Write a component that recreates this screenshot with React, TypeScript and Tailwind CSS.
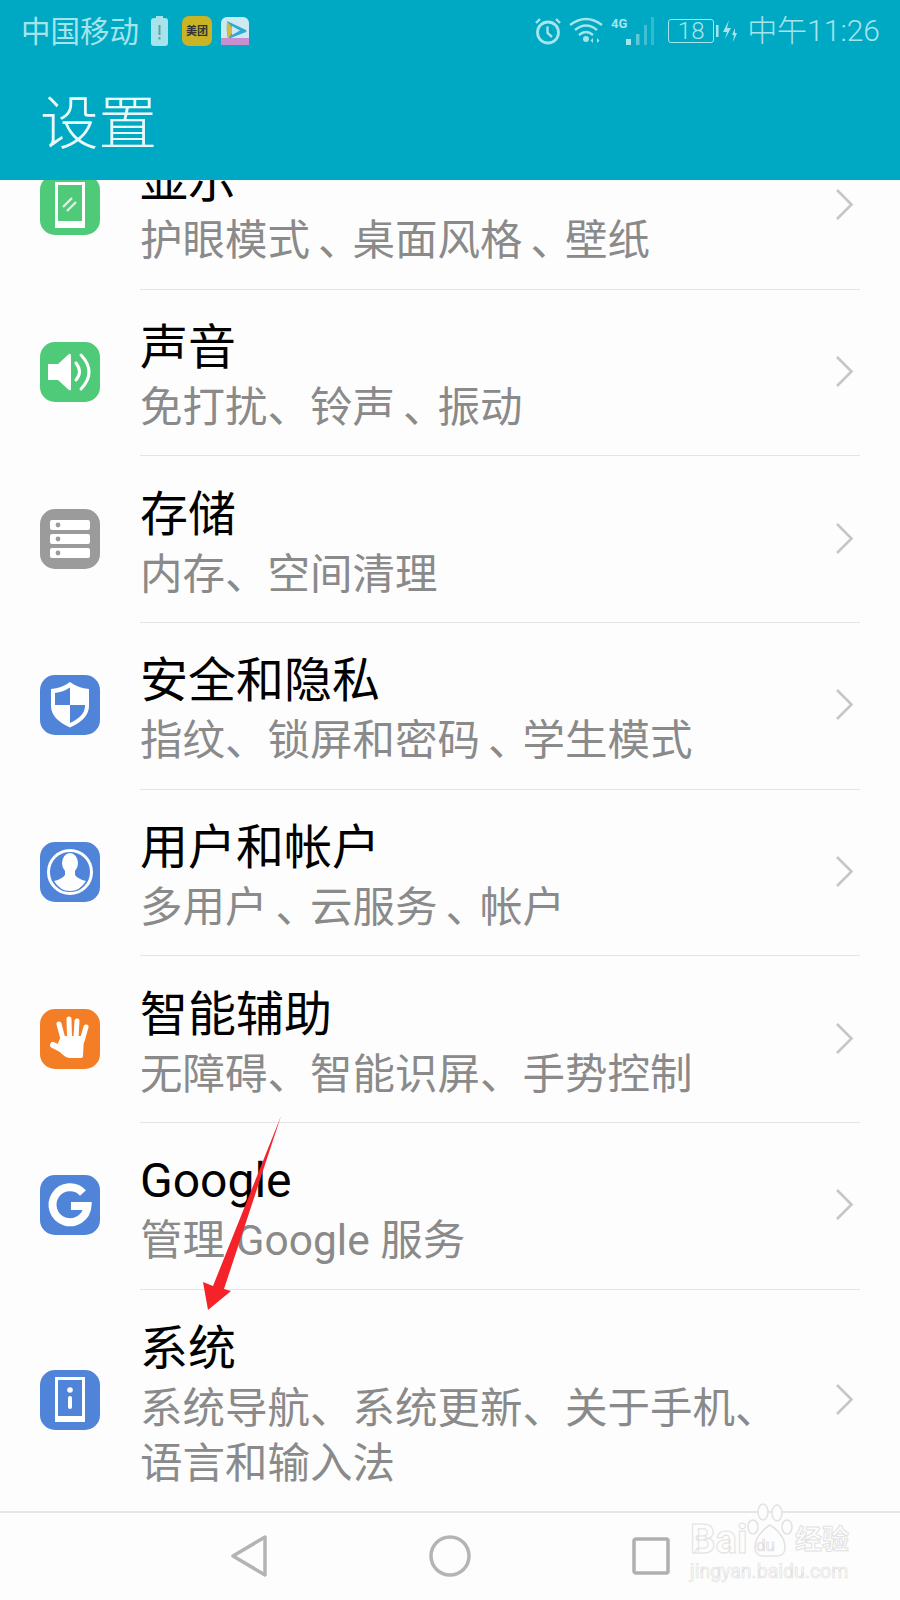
import React from "react";

const font = { fontFamily: 'Roboto, "Noto Sans CJK SC", sans-serif' };

const Box = ({ bg, children }: { bg: string; children: React.ReactNode }) => (
  <div className="w-[60px] h-[60px] rounded-[15px] shrink-0 overflow-hidden mb-[2px]" style={{ background: bg }}>
    <svg viewBox="0 0 60 60" width="60" height="60">{children}</svg>
  </div>
);

const GREEN = "#4fca78";
const BLUE = "#4f84d8";

const icons: Record<string, React.ReactNode> = {
  display: (
    <Box bg={GREEN}>
      <rect x="16.5" y="8.5" width="27" height="43" fill="none" stroke="#fff" strokeWidth="3" />
      <rect x="15" y="46" width="30" height="7" fill="#fff" />
      <path d="M23 32 L32 23 M27 36 L36 27" stroke="#d9f5e2" strokeWidth="2.4" />
    </Box>
  ),
  sound: (
    <Box bg={GREEN}>
      <path d="M8 22 H18 L29 12 Q31 11 31 14 V47 Q31 49 29 48 L18 38 H8 Z" fill="#fff" />
      <path d="M36 21 Q43 30 36 38" fill="none" stroke="#fff" strokeWidth="3" strokeLinecap="round" />
      <path d="M41 13 Q57 30 41 47" fill="none" stroke="#fff" strokeWidth="3" strokeLinecap="round" />
    </Box>
  ),
  storage: (
    <Box bg="#9b9b9b">
      <rect x="10" y="11" width="40" height="10" rx="2" fill="#fff" />
      <rect x="10" y="25" width="40" height="10" rx="2" fill="#fff" />
      <rect x="10" y="39" width="40" height="10" rx="2" fill="#fff" />
      <circle cx="18" cy="16" r="2.4" fill="#9b9b9b" />
      <circle cx="18" cy="30" r="2.4" fill="#9b9b9b" />
      <circle cx="18" cy="44" r="2.4" fill="#9b9b9b" />
    </Box>
  ),
  shield: (
    <Box bg={BLUE}>
      <path d="M30 7 Q38 13 49 14 V31 Q49 44 30 52.5 Q11 44 11 31 V14 Q22 13 30 7 Z" fill="#fff" />
      <path d="M30 12.5 V30 H15 V18 Q23 17 30 12.5 Z" fill={BLUE} />
      <path d="M30 30 H45 V31 Q45 41 30 48 Z" fill={BLUE} />
    </Box>
  ),
  user: (
    <Box bg={BLUE}>
      <circle cx="30" cy="30" r="21.5" fill="none" stroke="#fff" strokeWidth="3" />
      <ellipse cx="30" cy="21" rx="8" ry="10" fill="#fff" />
      <path d="M25 28 V33 Q22 37 14 39 Q20 49 30 49 Q40 49 46 39 Q38 37 35 33 V28 Z" fill="#fff" />
    </Box>
  ),
  hand: (
    <Box bg="#f47e26">
      <g stroke="#fff" strokeLinecap="round" fill="none">
        <path d="M23 30 L19 15" strokeWidth="5" />
        <path d="M29.5 28 L29 10" strokeWidth="5" />
        <path d="M36 28 L37 12" strokeWidth="5" />
        <path d="M42 32 L46 18" strokeWidth="5" />
        <path d="M23 41 L13 36" strokeWidth="6" />
      </g>
      <path d="M21 27 H44 L43 47 Q43 49 41 49 L30 49 Q26 49 22 45 L16 39 Z" fill="#fff" />
    </Box>
  ),
  google: (
    <Box bg={BLUE}>
      <path d="M43 18 A17.5 17.5 0 1 0 47.5 31 H31" fill="none" stroke="#fff" strokeWidth="8" />
    </Box>
  ),
  system: (
    <Box bg={BLUE}>
      <rect x="16.5" y="8.5" width="27" height="42" fill="none" stroke="#fff" strokeWidth="3" />
      <rect x="15" y="46" width="30" height="6" fill="#fff" />
      <circle cx="30" cy="20" r="2.8" fill="#fff" />
      <rect x="28" y="26" width="4" height="13" rx="2" fill="#fff" />
    </Box>
  ),
};

/* "~" marks an enumeration comma that sits further right in its cell in the reference */
const rows = [
  { icon: "display", title: "显示", lines: ["护眼模式~、桌面风格~、壁纸"] },
  { icon: "sound", title: "声音", lines: ["免打扰、铃声~、振动"] },
  { icon: "storage", title: "存储", lines: ["内存、空间清理"] },
  { icon: "shield", title: "安全和隐私", lines: ["指纹、锁屏和密码~、学生模式"] },
  { icon: "user", title: "用户和帐户", lines: ["多用户~、云服务~、帐户"] },
  { icon: "hand", title: "智能辅助", lines: ["无障碍、智能识屏、手势控制"] },
  { icon: "google", title: "Google", lines: ["管理 Google 服务"] },
  { icon: "system", title: "系统", lines: ["系统导航、系统更新、关于手机、", "语言和输入法"], tall: true },
];

function Sub({ text }: { text: string }) {
  const parts = text.split("~、");
  return (
    <div className="text-[42.5px] leading-[55px] text-[#8a8a8a] whitespace-nowrap">
      {parts.map((p, i) => (
        <React.Fragment key={i}>
          {i > 0 && <span className="ml-[8px] tracking-[-8px]">、</span>}
          {p}
        </React.Fragment>
      ))}
    </div>
  );
}

function Row({ r, last }: { r: (typeof rows)[number]; last: boolean }) {
  return (
    <div className={`flex items-center pl-[40px] pr-[40px] ${r.tall ? "h-[222px]" : "h-[166.7px]"}`}>
      {icons[r.icon]}
      <div className={`ml-[40px] flex-1 h-full flex items-center pr-[6px] ${last ? "" : "border-b border-[#e4e4e4]"}`}>
        <div className="flex-1 pt-[8px]">
          <div className="text-[48px] leading-[60px] mb-[2px] text-black">{r.title}</div>
          {r.lines.map((l) => (
            <Sub key={l} text={l} />
          ))}
        </div>
        <svg width="19" height="33" viewBox="0 0 19 33" className="shrink-0 mb-[2px]">
          <path d="M2 2 L16.5 16.5 L2 31" fill="none" stroke="#c6c6c6" strokeWidth="2.6" />
        </svg>
      </div>
    </div>
  );
}

const SB = "#a6e4ec";

function StatusBar() {
  return (
    <div className="h-[62px] flex items-center justify-between pl-[21px] pr-[20px]">
      <div className="flex items-center">
        <span className="text-[29.5px] leading-none mt-[3px]" style={{ color: SB }}>中国移动</span>
        <svg width="17" height="30" viewBox="0 0 17 30" className="ml-[12px]">
          <rect x="5" y="0" width="7" height="3" fill={SB} />
          <rect x="0" y="2" width="17" height="28" rx="3" fill={SB} />
          <rect x="7.5" y="9" width="2" height="10" fill="#6b9aa6" />
          <rect x="7.5" y="21" width="2" height="2.5" fill="#6b9aa6" />
        </svg>
        <div className="ml-[14px] w-[30px] h-[30px] rounded-[7px] bg-[#c9b425] flex items-center justify-center">
          <span className="text-[11px] leading-none font-bold text-[#333] whitespace-nowrap">美团</span>
        </div>
        <svg width="28" height="28" viewBox="0 0 28 28" className="ml-[9px]">
          <rect width="28" height="28" rx="6" fill="#cdeaf2" />
          <path d="M6 4 L25 13 Q26 14 25 15 L7 22 Q5 13 6 4 Z" fill="#2fa9cf" />
          <path d="M6 4 L13 13 L7 22 Q5 13 6 4 Z" fill="#d9b93a" />
          <path d="M11 9 L19 13.5 L11 18 Z" fill="#cdeaf2" />
          <rect y="21" width="28" height="7" fill="#c78fd0" />
        </svg>
      </div>
      <div className="flex items-center">
        <svg width="28" height="28" viewBox="0 0 28 28">
          <circle cx="14" cy="15.5" r="10.5" fill="none" stroke={SB} strokeWidth="2.8" />
          <path d="M13.5 9.5 V16 L18 20" fill="none" stroke={SB} strokeWidth="2.4" />
          <path d="M2 6 L6 2 M26 6 L22 2" stroke={SB} strokeWidth="2.4" />
        </svg>
        <svg width="35" height="28" viewBox="0 0 35 28" className="ml-[7px]">
          <path d="M1 8 Q17 -4 33 8 M6 13 Q17 4 28 13 M10 18 Q17 12 24 18" fill="none" stroke={SB} strokeWidth="2.4" />
          <circle cx="17" cy="22" r="3" fill={SB} />
          <path d="M24 21 L21.5 23.5 L24 26 Z M28 21 L30.5 23.5 L28 26 Z" fill={SB} />
        </svg>
        <svg width="44" height="28" viewBox="0 0 44 28" className="ml-[7px]">
          <text x="0" y="11" fontSize="13" fontWeight="700" fill={SB} fontFamily="Roboto, sans-serif">4G</text>
          <rect x="15" y="22" width="5" height="6" fill={SB} />
          <rect x="25" y="17" width="3.5" height="11" fill={SB} opacity="0.55" />
          <rect x="33" y="8" width="3" height="20" fill={SB} opacity="0.4" />
          <rect x="40" y="0" width="3" height="28" fill={SB} opacity="0.3" />
        </svg>
        <div className="ml-[13px] w-[46px] h-[24px] rounded-[3px] border-[1.5px] border-[#a6e4ec] flex items-center justify-center">
          <span className="text-[24px] leading-none font-light" style={{ color: SB }}>18</span>
        </div>
        <svg width="22" height="28" viewBox="0 0 22 28" className="ml-[2px]">
          <rect x="0" y="8" width="2.5" height="12" fill={SB} />
          <path d="M13 3 L7 15 H11 L9 22 L15 11 H11 Z" fill={SB} />
          <path d="M19 11 L16 18 H18 L17 25 L21 16 H19 Z" fill={SB} />
        </svg>
        <span className="ml-[9px] text-[30px] leading-none font-light" style={{ color: SB }}>中午11:26</span>
      </div>
    </div>
  );
}

export default function App() {
  return (
    <div className="relative w-[900px] h-[1600px] overflow-hidden flex flex-col bg-[#fdfdfd]" style={font}>
      <header className="h-[180px] shrink-0 bg-[#00a9c3]">
        <StatusBar />
        <h1 className="pl-[40px] mt-[32px] text-[58.5px] leading-[60px] font-light text-[#eafafc]">设置</h1>
      </header>
      <main className="flex-1 overflow-hidden">
        <div className="-mt-[57px]">
          {rows.map((r, i) => (
            <Row key={r.icon} r={r} last={i === rows.length - 1} />
          ))}
        </div>
      </main>
      <nav className="h-[89px] shrink-0 border-t-2 border-[#e6e6e6] flex items-center justify-center gap-[161px] pb-[2px]">
        <svg width="38" height="44" viewBox="0 0 38 44">
          <path d="M35 3 V41 L3 22 Z" fill="none" stroke="#b4b4b4" strokeWidth="3.5" strokeLinejoin="round" />
        </svg>
        <svg width="42" height="42" viewBox="0 0 42 42">
          <circle cx="21" cy="21" r="19" fill="none" stroke="#b4b4b4" strokeWidth="3.5" />
        </svg>
        <svg width="38" height="38" viewBox="0 0 38 38">
          <rect x="2" y="2" width="34" height="34" rx="2" fill="none" stroke="#b0b0b0" strokeWidth="3.5" />
        </svg>
      </nav>

      {/* red annotation arrow */}
      <svg className="absolute left-0 top-0 pointer-events-none" width="900" height="1600" viewBox="0 0 900 1600">
        <path d="M281 1116 L224 1289 L231 1291 L208 1310 L203 1282 L213 1286 Z" fill="#f5222a" />
      </svg>

      {/* watermark */}
      <div className="absolute left-[690px] top-[1503px] w-[165px] h-[80px] pointer-events-none text-[#fdfdfd]">
        <svg className="absolute left-[55px] top-0" width="50" height="56" viewBox="0 0 50 56">
          <g fill="#fdfdfd" stroke="#e2e2e2" strokeWidth="1.5">
            <ellipse cx="8" cy="24" rx="5" ry="7" />
            <ellipse cx="18" cy="9" rx="5" ry="8" />
            <ellipse cx="32" cy="10" rx="5" ry="8" />
            <ellipse cx="42" cy="24" rx="5" ry="7" />
            <path d="M25 22 Q35 28 39 38 Q43 53 31 53 L19 53 Q7 53 11 38 Q15 28 25 22 Z" />
          </g>
        </svg>
        <span className="absolute left-0 top-[17px] text-[40px] leading-none font-bold [-webkit-text-stroke:1px_#e2e2e2]">Bai</span>
        <span className="absolute left-[66px] top-[34px] text-[17px] leading-none [-webkit-text-stroke:0.7px_#dcdcdc]">du</span>
        <span className="absolute left-[105px] top-[24px] text-[27px] leading-none font-bold [-webkit-text-stroke:1px_#e2e2e2]">经验</span>
        <span className="absolute left-0 top-[59px] text-[19.5px] leading-none [-webkit-text-stroke:0.7px_#e2e2e2]">jingyan.baidu.com</span>
      </div>
    </div>
  );
}
